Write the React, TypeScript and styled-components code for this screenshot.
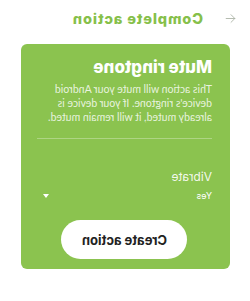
import styled, { createGlobalStyle } from "styled-components";

const GlobalStyle = createGlobalStyle`
  html, body {
    margin: 0;
    padding: 0;
    background: #ffffff;
  }
  body {
    font-family: Inter, "Noto Sans", "Liberation Sans", sans-serif;
  }
`;

// the reference is a mirrored capture, so the page is flipped as a whole
const Page = styled.div`
  width: 250px;
  height: 301px;
  transform: scaleX(-1);
  overflow: hidden;
`;

const Header = styled.div`
  height: 36px;
  display: flex;
  align-items: center;
  padding-left: 13px;
`;

const BackArrow = styled.svg`
  width: 13px;
  height: 13px;
  margin-right: 21px;
  color: #a9b1a4;
`;

const HeaderTitle = styled.div`
  font-size: 14.5px;
  font-weight: 800;
  letter-spacing: 0.9px;
  color: #86c04a;
`;

const Card = styled.div`
  margin: 8px 21px 0 20px;
  height: 225px;
  box-sizing: border-box;
  background: #8bc34f;
  border-radius: 6px;
  padding: 12px 16px 10px 18px;
  display: flex;
  flex-direction: column;
  color: #ffffff;
`;

const Title = styled.div`
  font-size: 17px;
  font-weight: 800;
  line-height: 22px;
`;

const Description = styled.div`
  margin-top: 4px;
  font-family: Lato, "Open Sans", sans-serif;
  font-size: 10.5px;
  line-height: 14px;
  width: 180px;
  color: rgba(255, 255, 255, 0.82);
`;

const Divider = styled.div`
  margin-top: 14px;
  height: 1px;
  background: rgba(255, 255, 255, 0.3);
`;

const FieldLabel = styled.div`
  margin-top: 31px;
  font-size: 12px;
  line-height: 14px;
  color: rgba(255, 255, 255, 0.9);
`;

const SelectRow = styled.div`
  margin-top: 6px;
  display: flex;
  align-items: center;
  justify-content: space-between;
  font-size: 9px;
  line-height: 12px;
`;

const Caret = styled.div`
  width: 0;
  height: 0;
  margin-right: 6px;
  border-left: 3px solid transparent;
  border-right: 3px solid transparent;
  border-top: 4px solid #ffffff;
`;

const ActionButton = styled.button`
  margin: auto auto 0;
  flex-shrink: 0;
  width: 126px;
  height: 39px;
  border: none;
  border-radius: 20px;
  background: #ffffff;
  color: #222222;
  font-family: inherit;
  font-size: 13px;
  font-weight: 700;
`;

export default function App() {
  return (
    <>
      <GlobalStyle />
      <Page>
        <Header>
          <BackArrow viewBox="0 0 24 24" fill="none" stroke="currentColor" strokeWidth="1.6" strokeLinecap="round" strokeLinejoin="round">
            <path d="M20 12H4" />
            <path d="M11 5l-7 7 7 7" />
          </BackArrow>
          <HeaderTitle>Complete action</HeaderTitle>
        </Header>
        <Card>
          <Title>Mute ringtone</Title>
          <Description>
            This action will mute your Android device's ringtone. If your device is already muted, it will remain muted.
          </Description>
          <Divider />
          <FieldLabel>Vibrate</FieldLabel>
          <SelectRow>
            <span>Yes</span>
            <Caret />
          </SelectRow>
          <ActionButton>Create action</ActionButton>
        </Card>
      </Page>
    </>
  );
}
